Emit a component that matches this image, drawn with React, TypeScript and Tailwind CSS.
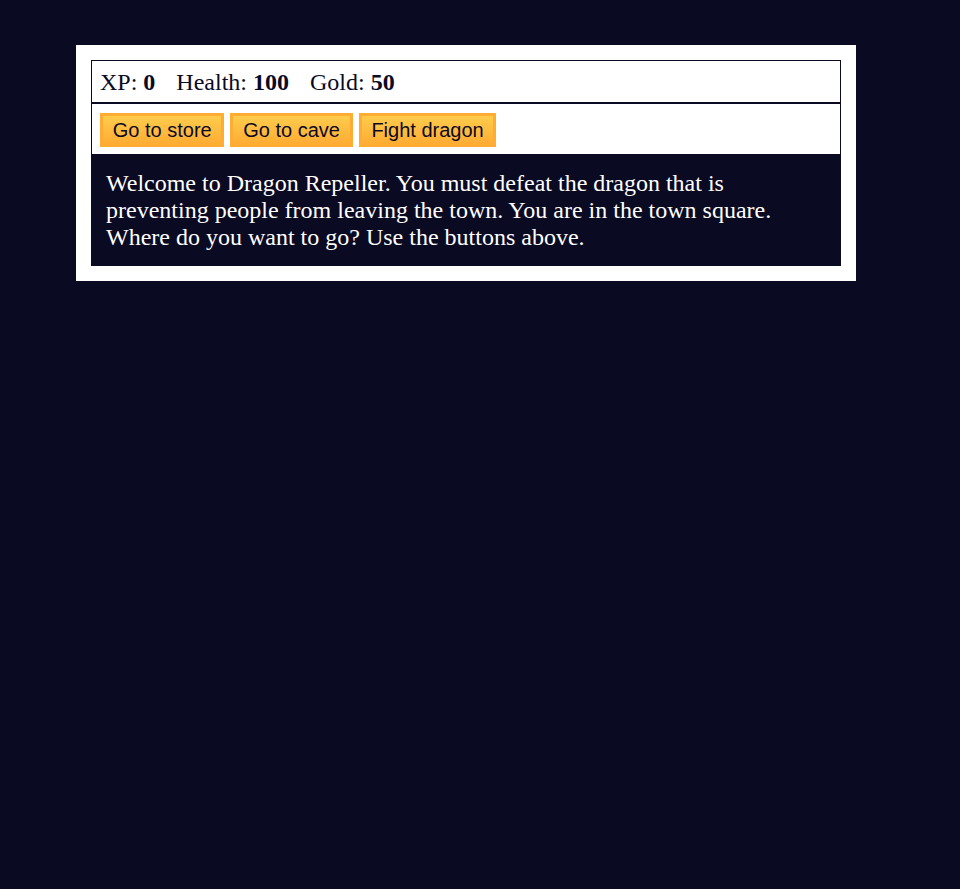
const stats = [
  { label: "XP", value: 0 },
  { label: "Health", value: 100 },
  { label: "Gold", value: 50 },
];

const actions = ["Go to store", "Go to cave", "Fight dragon"];

const App = () => {
  return (
    <div className="min-h-screen bg-[#0a0a23] pt-[45px]">
      <div
        className="ml-[76px] w-[780px] bg-white p-[15px]"
        style={{ fontFamily: '"Liberation Serif", "Times New Roman", serif' }}
      >
        <div className="border border-b-2 border-[#0a0a23] px-[8px] pb-[7px] pt-[9px] text-[24px] leading-[25px] text-[#0a0a23]">
          {stats.map((stat, i) => (
            <span key={stat.label}>
              <span className="pr-[15px]">
                {stat.label}: <strong>{stat.value}</strong>
              </span>
              {i < stats.length - 1 ? " " : ""}
            </span>
          ))}
        </div>

        <div className="flex gap-[6px] border border-t-0 border-[#0a0a23] px-[8px] pb-[7px] pt-[9px]">
          {actions.map((action) => (
            <button
              key={action}
              className="h-[34px] cursor-pointer border-[3px] border-[#feac32] bg-[#feac32] bg-gradient-to-b from-[#fecc4c] to-[#ffac33] px-[9.75px] text-[20px] leading-[23px] text-[#0a0a23]"
              style={{ fontFamily: '"Liberation Sans", Arial, sans-serif' }}
            >
              {action}
            </button>
          ))}
        </div>

        <div className="bg-[#0a0a23] p-[15px] text-[24px] leading-[27px] text-white">
          Welcome to Dragon Repeller. You must defeat the dragon that is
          preventing people from leaving the town. You are in the town square.
          Where do you want to go? Use the buttons above.
        </div>
      </div>
    </div>
  );
};

export default App;
